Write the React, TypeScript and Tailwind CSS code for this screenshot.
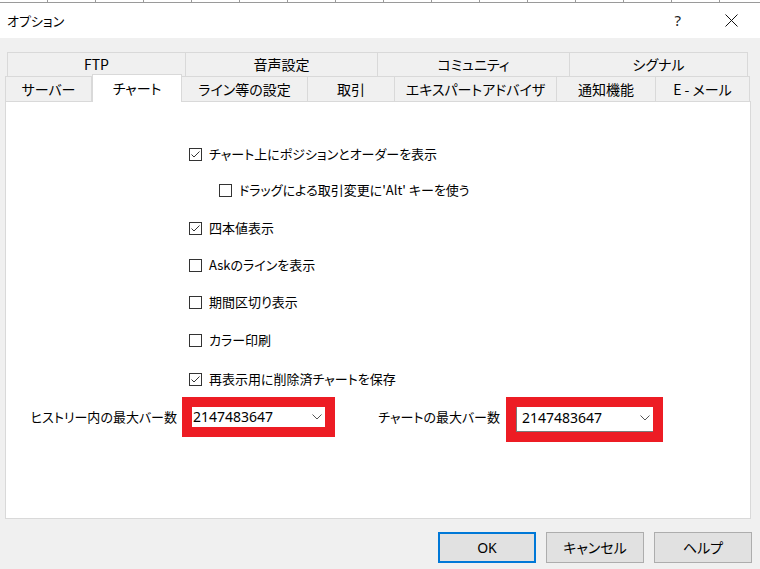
import React from "react";

// tab definitions: label + pixel width of each tab
const topTabs = [
  { label: "FTP", w: "w-[179px]" },
  { label: "音声設定", w: "w-[192px]" },
  { label: "コミュニティ", w: "w-[192px]" },
  { label: "シグナル", w: "w-[178px]" },
];

const bottomTabs = [
  { label: "サーバー", w: "w-[87px]" },
  { label: "チャート", w: "w-[90px]", active: true },
  { label: "ライン等の設定", w: "w-[126px]" },
  { label: "取引", w: "w-[87px]" },
  { label: "エキスパートアドバイザ", w: "w-[162px]" },
  { label: "通知機能", w: "w-[99px]" },
  { label: "E - メール", w: "w-[94px]" },
];

const options = [
  { label: "チャート上にポジションとオーダーを表示", checked: true, mt: "mt-[42px]" },
  { label: "ドラッグによる取引変更に'Alt' キーを使う", checked: false, mt: "mt-[16px]", indent: true },
  { label: "四本値表示", checked: true, mt: "mt-[18px]" },
  { label: "Askのラインを表示", checked: false, mt: "mt-[17px]" },
  { label: "期間区切り表示", checked: false, mt: "mt-[17px]" },
  { label: "カラー印刷", checked: false, mt: "mt-[18px]" },
  { label: "再表示用に削除済チャートを保存", checked: true, mt: "mt-[19px]" },
];

function CheckBox({ checked }: { checked: boolean }) {
  return (
    <span className="w-[13px] h-[13px] border border-[#333333] bg-white flex items-center justify-center shrink-0">
      {checked && (
        <svg width="11" height="11" viewBox="0 0 11 11">
          <polyline points="1.5,5.5 4,8 9.5,2.5" fill="none" stroke="#333" strokeWidth="1" />
        </svg>
      )}
    </span>
  );
}

function Chevron() {
  return (
    <svg width="10" height="6" viewBox="0 0 10 6">
      <polyline points="0.5,0.5 5,5 9.5,0.5" fill="none" stroke="#555" strokeWidth="1" />
    </svg>
  );
}

export default function App() {
  return (
    <div className="w-[760px] h-[569px] bg-[#f0f0f0] flex flex-col overflow-hidden text-[#000] font-['Noto_Sans_CJK_JP','Noto_Sans',sans-serif] [font-feature-settings:'palt']">
      {/* sliver of the window behind */}
      <div className="h-[3px] bg-white flex border-b border-[#9a9a9a] shrink-0">
        {Array.from({ length: 16 }).map((_, i) => (
          <div key={i} className="w-[48px] h-[2px] border-r border-[#9a9a9a] shrink-0" />
        ))}
      </div>

      {/* title bar */}
      <div className="h-[35px] bg-white flex items-center shrink-0">
        <span className="ml-[7px] text-[13px]">オプション</span>
        <span className="ml-auto mr-[44px] text-[15px] font-['Noto_Sans',sans-serif] text-[#222]">?</span>
        <svg width="13" height="13" viewBox="0 0 13 13" className="mr-[22px]">
          <path d="M0.5 0.5 L12.5 12.5 M12.5 0.5 L0.5 12.5" stroke="#111" strokeWidth="1" />
        </svg>
      </div>

      {/* tab strip, top row */}
      <div className="mt-[14px] ml-[7px] flex h-[24px] shrink-0">
        {topTabs.map((t, i) => (
          <div
            key={t.label}
            className={`${t.w} h-full border-t border-r border-[#d9d9d9] ${i === 0 ? "border-l" : ""} flex items-center justify-center text-[14px]`}
          >
            {t.label}
          </div>
        ))}
      </div>

      {/* tab strip, bottom row */}
      <div className="ml-[5px] flex h-[25px] shrink-0 items-end">
        {bottomTabs.map((t, i) =>
          t.active ? (
            <div
              key={t.label}
              className={`${t.w} h-[28px] -mb-[1px] relative z-10 bg-white border-t border-l border-r border-[#d9d9d9] flex items-center justify-center text-[14px] pb-[1px]`}
            >
              {t.label}
            </div>
          ) : (
            <div
              key={t.label}
              className={`${t.w} h-full border-t border-r border-[#d9d9d9] ${i === 0 ? "border-l" : ""} flex items-center justify-center text-[14px]`}
            >
              {t.label}
            </div>
          )
        )}
      </div>

      {/* page */}
      <div className="ml-[5px] w-[746px] h-[418px] bg-white border border-[#d9d9d9] flex flex-col shrink-0">
        <div className="flex flex-col pl-[183px]">
          {options.map((o) => (
            <div
              key={o.label}
              className={`${o.mt} ${o.indent ? "ml-[30px]" : ""} h-[20px] flex items-center gap-[7px] text-[13px]`}
            >
              <CheckBox checked={o.checked} />
              <span>{o.label}</span>
            </div>
          ))}
        </div>

        <div className="mt-[8px] flex items-start">
          <div className="w-[171px] h-[40px] flex items-center justify-end text-[13px]">
            ヒストリー内の最大バー数
          </div>
          <div className="ml-[5px] p-[10px] bg-[#ed1c24]">
            <div className="w-[133px] h-[20px] bg-white flex items-center pl-[1px] pr-[3px]">
              <span className="text-[14px] font-['Noto_Sans',sans-serif] leading-none">2147483647</span>
              <span className="ml-auto flex"><Chevron /></span>
            </div>
          </div>

          <div className="w-[165px] h-[40px] flex items-center justify-end text-[13px]">
            チャートの最大バー数
          </div>
          <div className="ml-[6px] p-[10px] bg-[#ed1c24]">
            <div className="w-[137px] h-[25px] bg-white border-l border-b border-[#7a7a7a] flex items-center pl-[5px] pr-[3px] pb-[3px]">
              <span className="text-[14px] font-['Noto_Sans',sans-serif] leading-none">2147483647</span>
              <span className="ml-auto flex"><Chevron /></span>
            </div>
          </div>
        </div>
      </div>

      {/* dialog buttons */}
      <div className="mt-[13px] flex gap-[10px] pl-[438px]">
        <button className="w-[98px] h-[31px] bg-[#e1e1e1] border-2 border-[#0078d7] text-[14px] font-['Noto_Sans',sans-serif]">
          OK
        </button>
        <button className="w-[98px] h-[31px] bg-[#e1e1e1] border border-[#adadad] text-[14px]">
          キャンセル
        </button>
        <button className="w-[98px] h-[31px] bg-[#e1e1e1] border border-[#adadad] text-[14px]">
          ヘルプ
        </button>
      </div>
    </div>
  );
}
